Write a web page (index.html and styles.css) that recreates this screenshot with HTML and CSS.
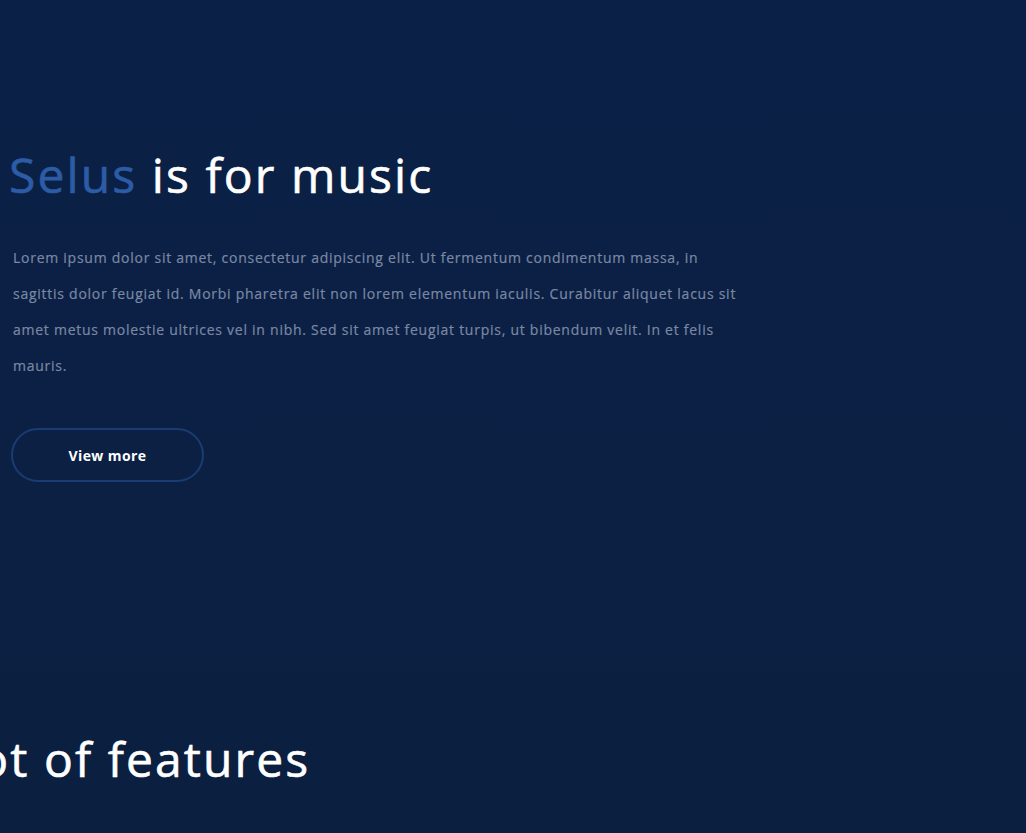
FILE: index.html
```html
<!DOCTYPE html>
<html lang="en">
<head>
<meta charset="utf-8">
<title>Selus</title>
<link rel="stylesheet" href="styles.css">
</head>
<body>
<main class="page">
  <section class="hero">
    <h1 class="title"><span class="brand">Selus</span> is for music</h1>
    <p class="lead">Lorem ipsum dolor sit amet, consectetur adipiscing elit. Ut fermentum condimentum massa, in sagittis dolor feugiat id. Morbi pharetra elit non lorem elementum iaculis. Curabitur aliquet lacus sit amet metus molestie ultrices vel in nibh. Sed sit amet feugiat turpis, ut bibendum velit. In et felis mauris.</p>
    <a class="btn" href="#">View more</a>
  </section>
  <section class="features">
    <h2 class="title title--shift">A lot of features</h2>
  </section>
</main>
</body>
</html>
```
FILE: styles.css
```css
html, body {
  margin: 0;
  padding: 0;
  height: 100%;
}
body {
  background: linear-gradient(180deg, #0b2046 0%, #0b2043 60%, #0b1f40 100%);
  font-family: "Open Sans", "Liberation Sans", sans-serif;
  color: #ffffff;
  overflow: hidden;
}
.page {
  display: flex;
  flex-direction: column;
}
.hero {
  padding: 146px 0 0 9px;
  display: flex;
  flex-direction: column;
  align-items: flex-start;
}
.title {
  margin: 0;
  font-size: 48px;
  font-weight: 400;
  letter-spacing: 2.1px;
  line-height: 58px;
  color: #ffffff;
  white-space: nowrap;
  -webkit-text-stroke: 0.6px currentColor;
}
.brand {
  color: #2c5ca6;
}
.lead {
  margin: 36px 0 0 4px;
  width: 740px;
  font-size: 14px;
  font-weight: 400;
  letter-spacing: 0.74px;
  line-height: 36px;
  color: #7b88a4;
  -webkit-text-stroke: 0.2px currentColor;
}
.btn {
  margin: 44px 0 0 2px;
  width: 189px;
  height: 50px;
  border: 2px solid #1b3c73;
  border-radius: 27px;
  display: flex;
  align-items: center;
  justify-content: center;
  color: #ffffff;
  font-size: 14px;
  font-weight: 700;
  letter-spacing: 0.4px;
  text-decoration: none;
}
.features {
  padding-top: 248px;
}
.title--shift {
  transform: translateX(-82px);
}
```
